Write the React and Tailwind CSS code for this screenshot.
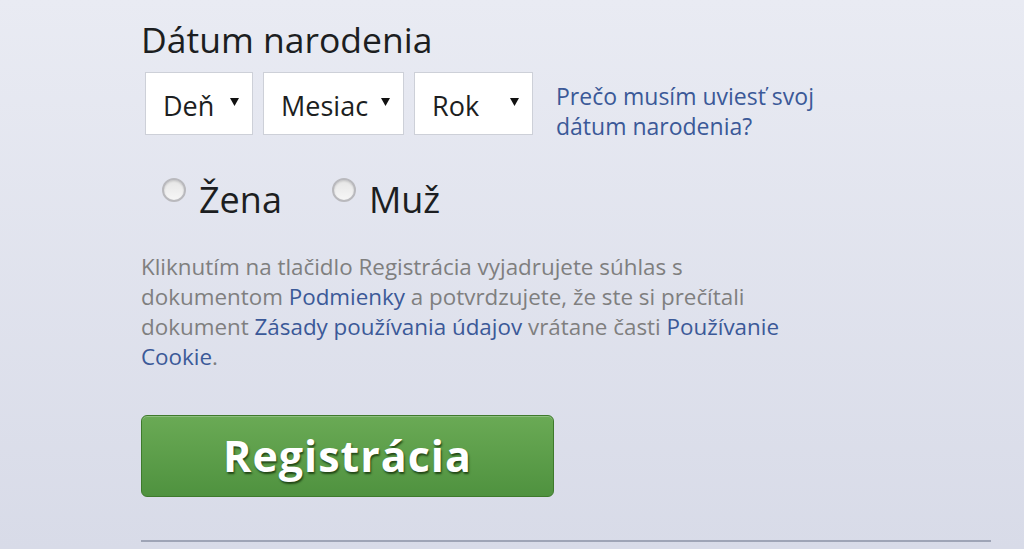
import React from "react";

function Select({ label, width }) {
  return (
    <div
      className={`flex h-[63px] items-center justify-between border border-[#cdd0d8] bg-white pl-[17px] pr-[13px] ${width}`}
    >
      <span className="pt-[6px] text-[27px] text-[#1c1e21]">{label}</span>
      <svg width="9" height="8" viewBox="0 0 9 8" className="mb-[4px]">
        <path d="M0 0h9L4.5 8z" fill="#111" />
      </svg>
    </div>
  );
}

function Radio({ label }) {
  return (
    <label className="flex items-start gap-[13px]">
      <span className="mt-[1px] h-[24px] w-[24px] rounded-full border-2 border-[#b9b9bd] bg-gradient-to-b from-[#e6e6e6] to-[#f6f6f6] shadow-[inset_0_1px_2px_rgba(0,0,0,0.15)]" />
      <span className="pt-[3px] text-[36px] leading-[40px] text-[#1c1e21]">{label}</span>
    </label>
  );
}

export default function App() {
  return (
    <div
      className="h-[549px] w-[1024px] overflow-hidden bg-gradient-to-b from-[#e9ebf3] to-[#d8dbe8] pl-[141px] pt-[16px]"
      style={{ fontFamily: '"Open Sans", "Noto Sans", sans-serif' }}
    >
      <h1 className="text-[35.5px] leading-[46px] text-[#1c1e21]">Dátum narodenia</h1>

      <div className="mt-[10px] flex items-start">
        <div className="ml-[4px] flex gap-[10px]">
          <Select label="Deň" width="w-[108px]" />
          <Select label="Mesiac" width="w-[141px]" />
          <Select label="Rok" width="w-[119px]" />
        </div>
        <a className="ml-[23px] mt-[9px] w-[300px] text-[23px] leading-[30px] text-[#3b5998]">
          Prečo musím uviesť svoj dátum narodenia?
        </a>
      </div>

      <div className="ml-[21px] mt-[36px] flex gap-[50px]">
        <Radio label="Žena" />
        <Radio label="Muž" />
      </div>

      <p className="mt-[32px] w-[665px] text-[22.4px] leading-[30px] text-[#7f7f7f]">
        Kliknutím na tlačidlo Registrácia vyjadrujete súhlas s dokumentom{" "}
        <a className="text-[#3b5998]">Podmienky</a> a potvrdzujete, že ste si prečítali dokument{" "}
        <a className="text-[#3b5998]">Zásady používania údajov</a> vrátane časti{" "}
        <a className="text-[#3b5998]">Používanie Cookie</a>.
      </p>

      <button className="mt-[43px] flex h-[82px] w-[413px] items-center justify-center rounded-[6px] border border-[#3e7a2c] bg-gradient-to-b from-[#6aaa55] to-[#4f923f] shadow-[inset_0_1px_0_rgba(255,255,255,0.25)]">
        <span className="text-[43px] font-bold tracking-[1px] text-white [text-shadow:1px_2px_2px_rgba(20,50,10,0.8)]">
          Registrácia
        </span>
      </button>

      <div className="mt-[43px] h-[2px] w-[850px] bg-[#9ea4b6]" />
    </div>
  );
}
